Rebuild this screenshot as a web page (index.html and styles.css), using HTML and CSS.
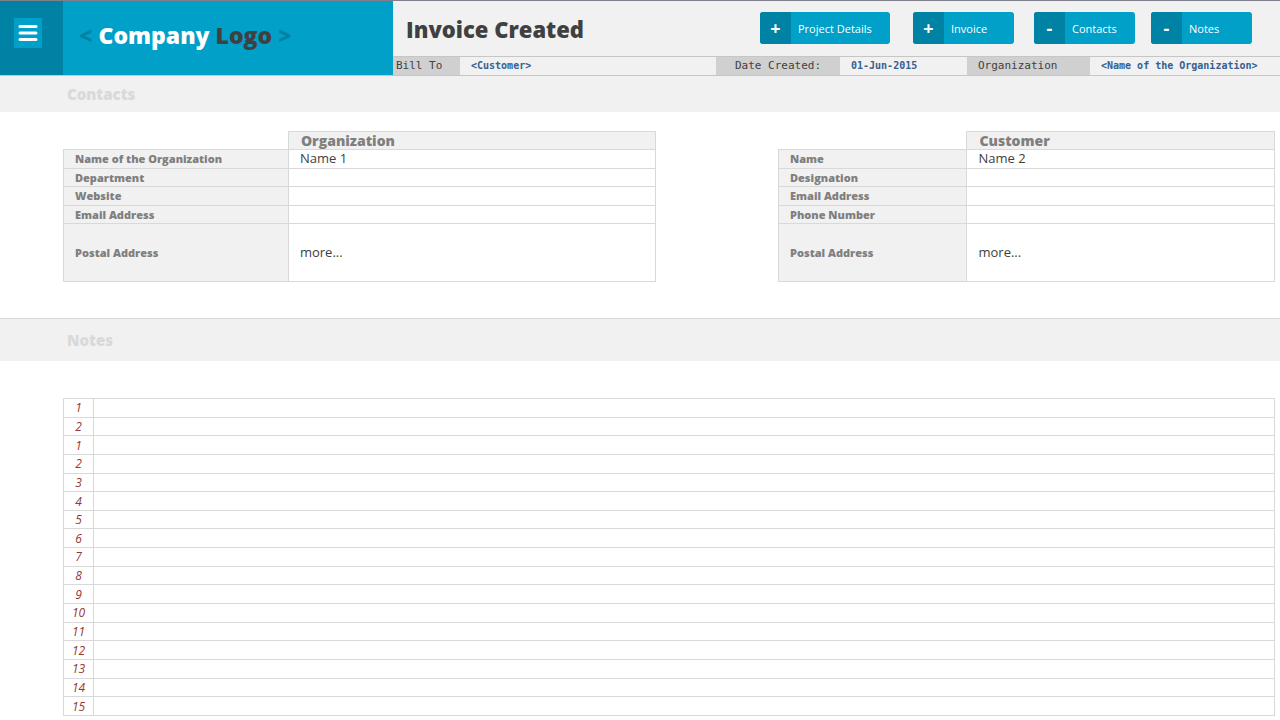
FILE: index.html
```
<!DOCTYPE html>
<html lang="en">
<head>
  <meta charset="UTF-8">
  <meta name="viewport" content="width=device-width, initial-scale=1.0">
  <title>Invoice Created</title>
  <link rel="stylesheet" href="styles.css">
</head>
<body>
  <header class="header">
    <div class="menu-cell">
      <button class="hamburger" type="button" aria-label="Menu">
        <svg width="20" height="18" viewBox="0 0 20 18" fill="none" stroke="#fff" stroke-width="3" stroke-linecap="round">
          <path d="M2 2.500h16M2 9h16M2 15.500h16"/>
        </svg>
      </button>
    </div>
    <a class="logo" href="#"><span class="bracket">&lt;</span> Company <span class="dark">Logo</span> <span class="bracket">&gt;</span></a>

    <div class="header-main">
      <div class="title-bar">
        <h1>Invoice Created</h1>
        <nav class="actions">
          <button class="btn btn-wide" type="button"><span class="sign">+</span><span class="label">Project Details</span></button>
          <button class="btn" type="button"><span class="sign">+</span><span class="label">Invoice</span></button>
          <button class="btn" type="button"><span class="sign">-</span><span class="label">Contacts</span></button>
          <button class="btn" type="button"><span class="sign">-</span><span class="label">Notes</span></button>
        </nav>
      </div>
      <dl class="info-bar">
        <dt class="bill">Bill To</dt>
        <dd>&lt;Customer&gt;</dd>
        <dt class="date">Date Created:</dt>
        <dd>01-Jun-2015</dd>
        <dt>Organization</dt>
        <dd>&lt;Name of the Organization&gt;</dd>
      </dl>
    </div>
  </header>

  <main>
    <h2 class="section-title">Contacts</h2>
    <div class="contacts">
      <table class="contact-table">
        <thead>
          <tr><td class="blank"></td><th scope="col">Organization</th></tr>
        </thead>
        <tbody>
          <tr><th scope="row">Name of the Organization</th><td>Name 1</td></tr>
          <tr><th scope="row">Department</th><td></td></tr>
          <tr><th scope="row">Website</th><td></td></tr>
          <tr><th scope="row">Email Address</th><td></td></tr>
          <tr class="tall"><th scope="row">Postal Address</th><td>more...</td></tr>
        </tbody>
      </table>

      <table class="contact-table">
        <thead>
          <tr><td class="blank"></td><th scope="col">Customer</th></tr>
        </thead>
        <tbody>
          <tr><th scope="row">Name</th><td>Name 2</td></tr>
          <tr><th scope="row">Designation</th><td></td></tr>
          <tr><th scope="row">Email Address</th><td></td></tr>
          <tr><th scope="row">Phone Number</th><td></td></tr>
          <tr class="tall"><th scope="row">Postal Address</th><td>more...</td></tr>
        </tbody>
      </table>
    </div>

    <h2 class="section-title notes-title">Notes</h2>
    <div class="notes">
      <table class="notes-table">
        <tbody>
          <tr><th scope="row">1</th><td></td></tr>
          <tr><th scope="row">2</th><td></td></tr>
          <tr><th scope="row">1</th><td></td></tr>
          <tr><th scope="row">2</th><td></td></tr>
          <tr><th scope="row">3</th><td></td></tr>
          <tr><th scope="row">4</th><td></td></tr>
          <tr><th scope="row">5</th><td></td></tr>
          <tr><th scope="row">6</th><td></td></tr>
          <tr><th scope="row">7</th><td></td></tr>
          <tr><th scope="row">8</th><td></td></tr>
          <tr><th scope="row">9</th><td></td></tr>
          <tr><th scope="row">10</th><td></td></tr>
          <tr><th scope="row">11</th><td></td></tr>
          <tr><th scope="row">12</th><td></td></tr>
          <tr><th scope="row">13</th><td></td></tr>
          <tr><th scope="row">14</th><td></td></tr>
          <tr><th scope="row">15</th><td></td></tr>
        </tbody>
      </table>
    </div>
  </main>
</body>
</html>
```
FILE: styles.css
```
:root {
  --blue: #00a0c8;
  --blue-dark: #0082a4;
  --band: #f1f1f1;
  --label: #d0d0d0;
  --line: #d9d9d9;
  --text: #404040;
}

* {
  box-sizing: border-box;
}

body {
  margin: 0;
  font-family: "Open Sans", "Noto Sans", sans-serif;
  font-size: 13px;
  color: var(--text);
  background: #fff;
}

.header {
  display: grid;
  grid-template-columns: 63px 330px 1fr;
  height: 76px;
  background: var(--band);
  border-top: 1px solid #80808c;
  border-bottom: 1px solid #c6c6c6;
}

.menu-cell {
  background: var(--blue-dark);
  padding: 17px 14px;
}

.hamburger {
  display: flex;
  align-items: center;
  justify-content: center;
  width: 28px;
  height: 30px;
  padding: 0;
  border: none;
  background: var(--blue);
  cursor: pointer;
}

.logo {
  background: var(--blue);
  color: #fff;
  font-size: 23px;
  font-weight: 800;
  line-height: 68px;
  padding-left: 16px;
  text-decoration: none;
  white-space: nowrap;
}

.logo .bracket {
  color: var(--blue-dark);
}

.logo .dark {
  color: var(--text);
}

.header-main {
  min-width: 0;
}

.title-bar {
  display: flex;
  justify-content: space-between;
  align-items: flex-start;
  height: 55px;
  padding: 11px 28px 0 13px;
}

.title-bar h1 {
  margin: 0;
  font-size: 22px;
  font-weight: 800;
  line-height: 34px;
  white-space: nowrap;
}

.actions {
  display: grid;
  grid-template-columns: 153px 121px 117px 101px;
}

.btn {
  display: flex;
  align-items: center;
  width: 101px;
  height: 32px;
  padding: 0;
  border: none;
  border-radius: 3px;
  overflow: hidden;
  background: var(--blue);
  color: #fff;
  font-family: inherit;
  font-size: 11px;
  cursor: pointer;
}

.btn-wide {
  width: 130px;
}

.btn .sign {
  width: 31px;
  line-height: 32px;
  background: var(--blue-dark);
  font-size: 18px;
  font-weight: 700;
}

.btn .label {
  padding-left: 7px;
}

.info-bar {
  display: grid;
  grid-template-columns: 67px 256fr 124px 127fr 123px 190px;
  margin: 0;
  border-top: 1px solid #c6c6c6;
  font-family: "DejaVu Sans Mono", monospace;
  line-height: 18px;
  white-space: nowrap;
}

.info-bar dt {
  padding-left: 11px;
  background: var(--label);
  font-size: 11px;
}

.info-bar .bill {
  padding-left: 3px;
}

.info-bar .date {
  padding-left: 19px;
}

.info-bar dd {
  margin: 0;
  padding-left: 11px;
  color: #366092;
  font-size: 10px;
  font-weight: 700;
}

.section-title {
  margin: 0;
  padding-left: 67px;
  background: var(--band);
  color: var(--line);
  font-size: 15px;
  font-weight: 800;
  line-height: 36px;
}

.notes-title {
  border-top: 1px solid var(--line);
  line-height: 42px;
}

.contacts {
  display: grid;
  grid-template-columns: 593fr 497fr;
  gap: 122px;
  padding: 19px 5px 36px 63px;
}

table {
  width: 100%;
  border-collapse: collapse;
  table-layout: fixed;
}

th,
td {
  height: 18px;
  padding: 0;
  border: 1px solid var(--line);
  line-height: 17px;
  text-align: left;
}

.contact-table {
  height: 151px;
}

.contact-table th {
  padding-left: 11px;
  background: var(--band);
  color: #7f7f7f;
  font-size: 11px;
  font-weight: 800;
}

.contact-table td {
  padding-left: 11px;
}

.contact-table thead th {
  padding-left: 12px;
  font-size: 14px;
}

.contact-table .blank {
  width: 38%;
  border-top: none;
  border-left: none;
}

.contact-table .tall td {
  height: 56px;
}

.notes {
  padding: 37px 5px 4px 63px;
}

.notes-table {
  height: 318px;
}

.notes-table th {
  width: 30px;
  color: #963634;
  font-size: 12px;
  font-style: italic;
  font-weight: 400;
  text-align: center;
}
```
